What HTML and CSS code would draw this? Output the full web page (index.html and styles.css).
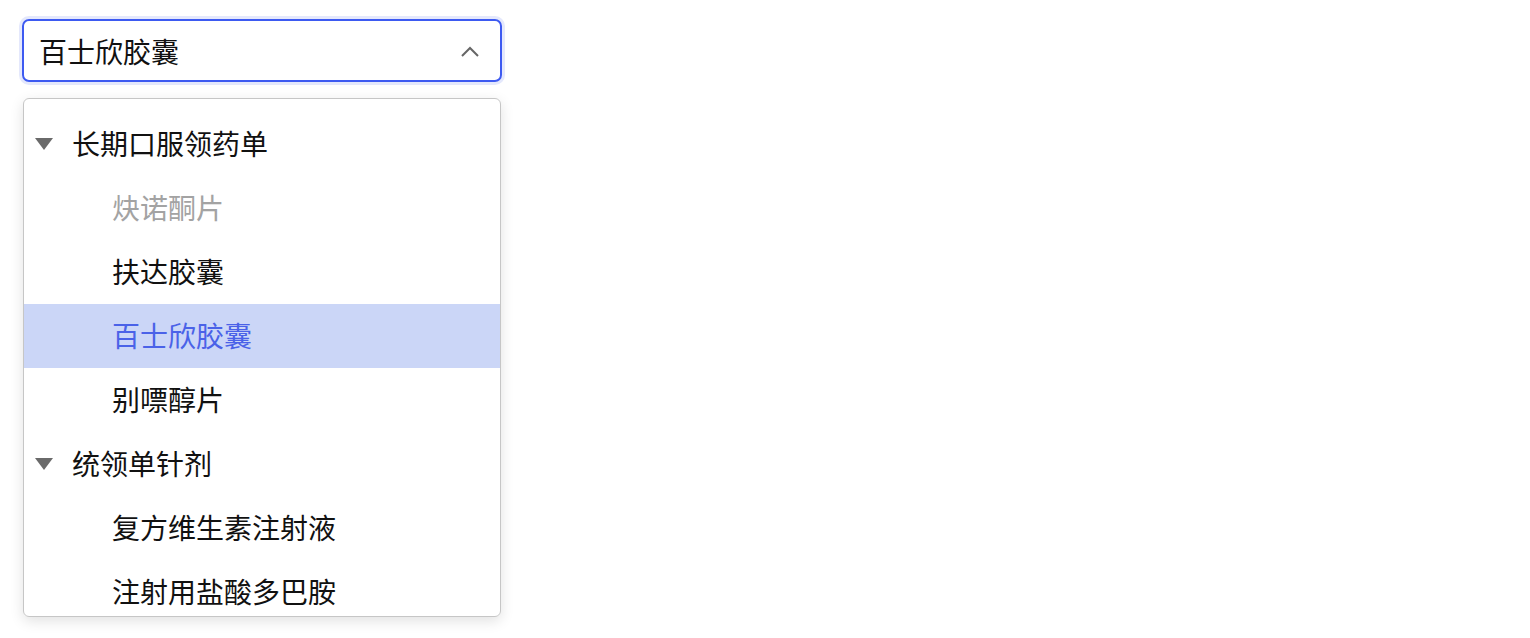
FILE: index.html
```html
<!DOCTYPE html>
<html lang="zh-CN">
<head>
    <meta charset="UTF-8">
    <meta name="viewport" content="width=device-width, initial-scale=1.0">
    <title>选择药品</title>
    <link rel="stylesheet" href="styles.css">
</head>
<body>
    <div class="picker">
        <div class="select">
            <span class="select-value">百士欣胶囊</span>
            <svg class="chevron" width="20" height="12" viewBox="0 0 20 12">
                <path d="M2 11 L10 3 L18 11" fill="none" stroke="#666" stroke-width="2"/>
            </svg>
        </div>

        <div class="dropdown">
            <ul class="options">
                <li class="group"><span class="caret"></span>长期口服领药单</li>
                <li class="item disabled">炔诺酮片</li>
                <li class="item">扶达胶囊</li>
                <li class="item selected">百士欣胶囊</li>
                <li class="item">别嘌醇片</li>
                <li class="group"><span class="caret"></span>统领单针剂</li>
                <li class="item">复方维生素注射液</li>
                <li class="item">注射用盐酸多巴胺</li>
            </ul>
        </div>
    </div>
</body>
</html>
```

FILE: styles.css
```css
body {
    margin: 0;
    padding: 18px 22px;
    background-color: #fff;
    font-family: "Noto Sans CJK SC", "Noto Sans", sans-serif;
    color: #111;
}
.picker {
    width: 480px;
}
.select {
    height: 59px;
    border: 2px solid #3d5af1; /* focus blue */
    border-radius: 7px;
    box-shadow: 0 0 0 3px #e4e8fc;
    display: flex;
    align-items: center;
    justify-content: space-between;
    padding: 0 20px 0 15px;
    margin-top: 1px;
}
.select-value {
    font-size: 28px;
    line-height: 1;
}
.chevron {
    display: block;
}
.dropdown {
    margin: 16px 1px 0 1px;
    height: 517px;
    border: 1px solid #c6c6c6;
    border-radius: 6px;
    box-shadow: 0 4px 14px rgba(0, 0, 0, 0.12);
    overflow: hidden;
}
.options {
    list-style: none;
    margin: 0;
    padding: 13px 0 0 0;
}
.options li {
    height: 64px;
    box-sizing: border-box;
    padding-bottom: 2px;
    display: flex;
    align-items: center;
    font-size: 28px;
}
.group {
    padding-left: 11px;
}
.caret {
    width: 0;
    height: 0;
    border-left: 9px solid transparent;
    border-right: 9px solid transparent;
    border-top: 12px solid #6a6a6a;
    margin-right: 19px;
    margin-top: 2px;
}
.item {
    padding-left: 88px;
}
.item.disabled {
    color: #a3a3a3;
}
.item.selected {
    background-color: #cbd6f7;
    color: #4a62e8;
}
```
